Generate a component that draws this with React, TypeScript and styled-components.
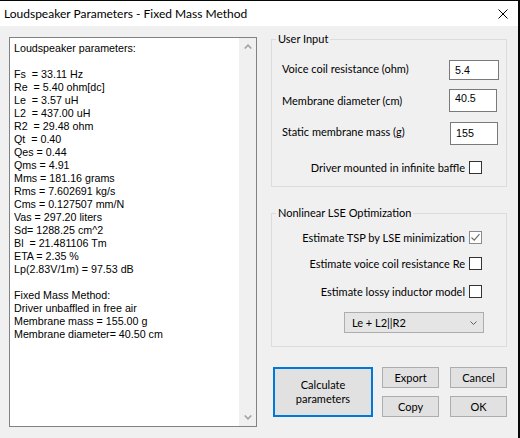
import React from "react";
import styled, { createGlobalStyle } from "styled-components";

const UI_FONT = `Lato, "Noto Sans", sans-serif`;
const MEMO_FONT = `"Liberation Sans", Arial, sans-serif`;

const GlobalStyle = createGlobalStyle`
  html, body {
    margin: 0;
    padding: 0;
    background: #060806;
  }
  body {
    width: 520px;
    height: 438px;
    overflow: hidden;
  }
  * {
    box-sizing: border-box;
  }
`;

const Desktop = styled.div`
  width: 520px;
  height: 438px;
  padding-top: 1px;
`;

const Window = styled.div`
  width: 518px;
  height: 437px;
  background: #f0f0f0;
  display: flex;
  flex-direction: column;
`;

const TitleBar = styled.div`
  height: 25px;
  flex: none;
  background: #ffffff;
  display: flex;
  align-items: center;
  justify-content: space-between;
  padding-left: 4px;
  font: 12px/16px ${UI_FONT};
  color: #000;
`;

const CloseGlyph = styled.svg`
  width: 10px;
  height: 10px;
  margin-right: 10px;
  display: block;
`;

const Client = styled.div`
  flex: 1;
  display: flex;
  align-items: flex-start;
  padding-left: 9px;
`;

/* read-only multi-line report box with a disabled vertical scrollbar */
const Memo = styled.div`
  margin-top: 11px;
  width: 248px;
  height: 390px;
  border: 1px solid #828282;
  background: #ffffff;
  display: flex;
`;

const MemoText = styled.div`
  flex: 1;
  padding: 4px 0 0 4px;
  font: 10.7px/13px ${MEMO_FONT};
  color: #000;
  white-space: pre;
  overflow: hidden;
`;

const ScrollBar = styled.div`
  width: 17px;
  flex: none;
  background: #f0f0f0;
  display: flex;
  flex-direction: column;
  justify-content: space-between;
`;

const ScrollButton = styled.div`
  height: 17px;
  display: flex;
  align-items: center;
  justify-content: center;
`;

const RightPane = styled.div`
  margin: 5px 0 0 14px;
  width: 236px;
  display: flex;
  flex-direction: column;
`;

const Group = styled.fieldset<{ $top: number; $bottom: number }>`
  margin: ${(p) => p.$top}px 0 0 0;
  padding: 0 0 ${(p) => p.$bottom}px 0;
  border: 1px solid #dcdcdc;
  min-width: 0;
  display: flex;
  flex-direction: column;
`;

const Legend = styled.legend`
  margin-left: 4px;
  padding: 0 2px;
  font: 11px/16px ${UI_FONT};
  color: #000;
`;

const FieldRow = styled.div<{ $top: number }>`
  margin-top: ${(p) => p.$top}px;
  padding-left: 10px;
  display: grid;
  grid-template-columns: 167px auto;
  align-items: center;
`;

const FieldLabel = styled.span<{ $lift: number }>`
  font: 11px/16px ${UI_FONT};
  color: #000;
  margin-bottom: ${(p) => p.$lift * 2}px;
`;

const TextInput = styled.input<{ $w: number; $h: number; $shift: number; $lift: number }>`
  width: ${(p) => p.$w}px;
  height: ${(p) => p.$h}px;
  margin: 0 0 0 ${(p) => p.$shift}px;
  padding: 0 0 ${(p) => p.$lift * 2}px 5px;
  border: 1px solid #7a7a7a;
  border-radius: 0;
  background: #ffffff;
  font: 10.7px ${MEMO_FONT};
  color: #000;
  outline: none;
`;

const CheckRow = styled.label<{ $top: number }>`
  margin-top: ${(p) => p.$top}px;
  padding-right: 24px;
  height: 13px;
  display: flex;
  align-items: center;
  justify-content: flex-end;
  gap: 4px;
  font: 11px/13px ${UI_FONT};
  color: #000;
`;

const CheckBox = styled.span<{ $checked?: boolean }>`
  width: 13px;
  height: 13px;
  flex: none;
  border: 1px solid ${(p) => (p.$checked ? "#8a8a8a" : "#333333")};
  background: #ffffff;
  display: flex;
  align-items: center;
  justify-content: center;
`;

const SelectRow = styled.div<{ $top: number }>`
  margin-top: ${(p) => p.$top}px;
  padding-right: 22px;
  display: flex;
  justify-content: flex-end;
`;

const ComboBox = styled.div`
  width: 140px;
  height: 21px;
  border: 1px solid #adadad;
  background: #e5e5e5;
  display: flex;
  align-items: center;
  justify-content: space-between;
  padding: 0 6px 0 7px;
  font: 11px/16px ${UI_FONT};
  color: #000;
`;

const ButtonArea = styled.div`
  margin: 20px 0 0 2px;
  display: flex;
  align-items: flex-start;
`;

const ButtonColumn = styled.div<{ $left: number }>`
  margin-left: ${(p) => p.$left}px;
  display: flex;
  flex-direction: column;
  gap: 8px;
`;

const Button = styled.button<{ $primary?: boolean; $w: number; $h: number }>`
  width: ${(p) => p.$w}px;
  height: ${(p) => p.$h}px;
  padding: 0;
  margin: 0;
  background: #e1e1e1;
  border: ${(p) => (p.$primary ? "2px solid #0078d7" : "1px solid #adadad")};
  border-radius: 0;
  font: 11px/${(p) => (p.$primary ? 14 : 16)}px ${UI_FONT};
  color: #000;
  text-align: center;
`;

const reportLines = [
  "Loudspeaker parameters:",
  "",
  "Fs  = 33.11 Hz",
  "Re  = 5.40 ohm[dc]",
  "Le  = 3.57 uH",
  "L2  = 437.00 uH",
  "R2  = 29.48 ohm",
  "Qt  = 0.40",
  "Qes = 0.44",
  "Qms = 4.91",
  "Mms = 181.16 grams",
  "Rms = 7.602691 kg/s",
  "Cms = 0.127507 mm/N",
  "Vas = 297.20 liters",
  "Sd= 1288.25 cm^2",
  "Bl  = 21.481106 Tm",
  "ETA = 2.35 %",
  "Lp(2.83V/1m) = 97.53 dB",
  "",
  "Fixed Mass Method:",
  "Driver unbaffled in free air",
  "Membrane mass = 155.00 g",
  "Membrane diameter= 40.50 cm",
];

const Chevron = ({ up, color }: { up?: boolean; color: string }) => (
  <svg width="8" height="5" viewBox="0 0 8 5">
    <polyline
      points={up ? "0.7,4.5 4,1.2 7.3,4.5" : "0.7,0.5 4,3.8 7.3,0.5"}
      fill="none"
      stroke={color}
      strokeWidth="1.6"
    />
  </svg>
);

const Check = () => (
  <svg width="11" height="11" viewBox="0 0 11 11">
    <polyline points="1.5,5.5 4.2,8.2 9.5,2.2" fill="none" stroke="#6a6a6a" strokeWidth="1.1" />
  </svg>
);

const Option = ({ label, checked, top }: { label: string; checked?: boolean; top: number }) => (
  <CheckRow $top={top}>
    {label}
    <CheckBox $checked={checked}>{checked && <Check />}</CheckBox>
  </CheckRow>
);

export default function App() {
  return (
    <>
      <GlobalStyle />
      <Desktop>
        <Window>
          <TitleBar>
            <span>Loudspeaker Parameters - Fixed Mass Method</span>
            <CloseGlyph viewBox="0 0 10 10">
              <path d="M0.5 0.5 L9.5 9.5 M9.5 0.5 L0.5 9.5" stroke="#000" strokeWidth="1" />
            </CloseGlyph>
          </TitleBar>
          <Client>
            <Memo>
              <MemoText>{reportLines.join("\n")}</MemoText>
              <ScrollBar>
                <ScrollButton>
                  <Chevron up color="#a3a3a3" />
                </ScrollButton>
                <ScrollButton>
                  <Chevron color="#a3a3a3" />
                </ScrollButton>
              </ScrollBar>
            </Memo>
            <RightPane>
              <Group $top={0} $bottom={12}>
                <Legend>User Input</Legend>
                <FieldRow $top={13}>
                  <FieldLabel $lift={1}>Voice coil resistance (ohm)</FieldLabel>
                  <TextInput $w={50} $h={20} $shift={0} $lift={0} defaultValue="5.4" />
                </FieldRow>
                <FieldRow $top={9}>
                  <FieldLabel $lift={0}>Membrane diameter (cm)</FieldLabel>
                  <TextInput $w={48} $h={23} $shift={0} $lift={2.5} defaultValue="40.5" />
                </FieldRow>
                <FieldRow $top={10}>
                  <FieldLabel $lift={2}>Static membrane mass (g)</FieldLabel>
                  <TextInput $w={48} $h={23} $shift={1} $lift={1} defaultValue="155" />
                </FieldRow>
                <Option top={16} label="Driver mounted in infinite baffle" />
              </Group>
              <Group $top={18} $bottom={13}>
                <Legend>Nonlinear LSE Optimization</Legend>
                <Option top={10} label="Estimate TSP by LSE minimization" checked />
                <Option top={13} label="Estimate voice coil resistance Re" />
                <Option top={15} label="Estimate lossy inductor model" />
                <SelectRow $top={14}>
                  <ComboBox>
                    <span>Le + L2||R2</span>
                    <svg width="7" height="4" viewBox="0 0 7 4">
                      <polyline points="0.5,0.5 3.5,3.5 6.5,0.5" fill="none" stroke="#606060" strokeWidth="1" />
                    </svg>
                  </ComboBox>
                </SelectRow>
              </Group>
              <ButtonArea>
                <Button $primary $w={100} $h={50}>
                  Calculate
                  <br />
                  parameters
                </Button>
                <ButtonColumn $left={9}>
                  <Button $w={57} $h={21}>Export</Button>
                  <Button $w={57} $h={21}>Copy</Button>
                </ButtonColumn>
                <ButtonColumn $left={11}>
                  <Button $w={57} $h={21}>Cancel</Button>
                  <Button $w={57} $h={21}>OK</Button>
                </ButtonColumn>
              </ButtonArea>
            </RightPane>
          </Client>
        </Window>
      </Desktop>
    </>
  );
}
